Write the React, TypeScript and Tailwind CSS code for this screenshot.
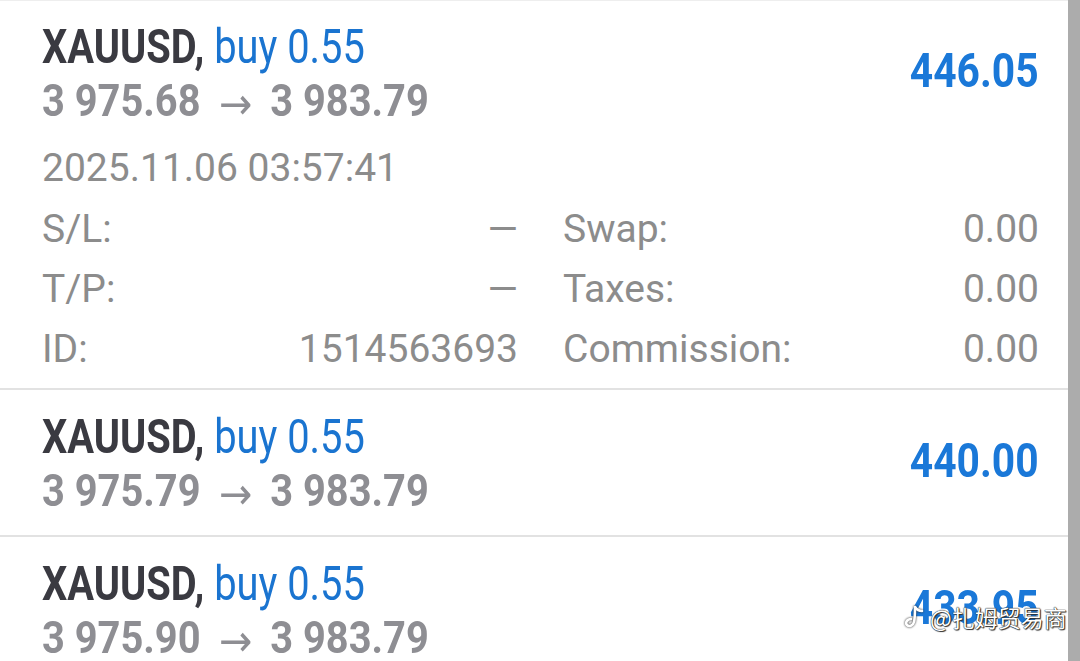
import React from "react";

type Trade = {
  open: string;
  close: string;
  profit: string;
  expanded?: boolean;
};

const trades: Trade[] = [
  { open: "3 975.68", close: "3 983.79", profit: "446.05", expanded: true },
  { open: "3 975.79", close: "3 983.79", profit: "440.00" },
  { open: "3 975.90", close: "3 983.79", profit: "433.95" },
];

const roboto = "font-['Roboto','Liberation_Sans',sans-serif]";

function Header({ t }: { t: Trade }) {
  return (
    <div className="flex items-center justify-between">
      <div className="flex flex-col">
        <div className="h-[52px] leading-[52px] whitespace-nowrap">
          <span className="inline-block origin-left scale-x-[0.83] text-[48px]">
            <span className="font-bold text-[#3a3a41]">XAUUSD, </span>
            <span className="font-normal text-[#1a74d0]">buy 0.55</span>
          </span>
        </div>
        <div className="h-[56px] leading-[56px] whitespace-nowrap">
          <span className="inline-block origin-left scale-x-[0.905] text-[44px] font-bold text-[#8e8e93]">
            {t.open}
            <span className="inline-block w-[77px] text-center font-['DejaVu_Sans',sans-serif] text-[44px] font-normal align-[-3px]">
              →
            </span>
            {t.close}
          </span>
        </div>
      </div>
      <div className="pb-[8px] whitespace-nowrap">
        <span className="inline-block origin-right scale-x-[0.85] text-[48px] font-bold leading-[52px] text-[#1a78d8]">
          {t.profit}
        </span>
      </div>
    </div>
  );
}

function Detail({ label, value }: { label: string; value: string }) {
  return (
    <div className="flex h-[60px] items-center justify-between leading-[60px]">
      <span>{label}</span>
      <span>{value}</span>
    </div>
  );
}

export default function App() {
  return (
    <div className={`relative flex h-[661px] w-[1080px] overflow-hidden bg-white ${roboto}`}>
      <div className="flex-1 border-t border-[#eeeeee]">
        {trades.map((t, i) => (
          <div
            key={i}
            className={`pl-[42px] pr-[29px] ${i === 0 ? "pt-[20px] pb-[9px]" : "pt-[21px] pb-[16px]"} ${
              i < trades.length - 1 ? "border-b-2 border-[#e2e2e2]" : ""
            }`}
          >
            <Header t={t} />
            {t.expanded && (
              <div className="mt-[8px] text-[39px] text-[#8c8c8c]">
                <div className="h-[62px] leading-[62px] whitespace-nowrap">2025.11.06 03:57:41</div>
                <div className="grid grid-cols-2 gap-x-[45px]">
                  <Detail label="S/L:" value="—" />
                  <Detail label="Swap:" value="0.00" />
                  <Detail label="T/P:" value="—" />
                  <Detail label="Taxes:" value="0.00" />
                  <Detail label="ID:" value="1514563693" />
                  <Detail label="Commission:" value="0.00" />
                </div>
              </div>
            )}
          </div>
        ))}
      </div>
      <div className="w-[12px] shrink-0 bg-[#acacac]" />

      <div className="absolute left-[904px] top-[603px] flex items-center gap-[6px] whitespace-nowrap">
        <svg width="20" height="26" viewBox="0 0 20 26" className="[filter:drop-shadow(0_0_1px_#222)]">
          <path
            d="M11 3 C11 9 11 14 10 18 C9 22 5 23 3 21 C1 19 3 15 7 15"
            fill="none"
            stroke="#ffffff"
            strokeWidth="2.6"
            strokeLinecap="round"
          />
          <path
            d="M11 3 C13 6 16 7 18 7"
            fill="none"
            stroke="#ffffff"
            strokeWidth="2.6"
            strokeLinecap="round"
          />
        </svg>
        <span className="font-['Noto_Sans_CJK_SC','Noto_Sans',sans-serif] text-[23px] leading-[28px] text-white [text-shadow:0_0_1px_#111,0_0_1px_#111,1px_1px_1px_#333]">
          @扎姆贸易商
        </span>
      </div>
    </div>
  );
}
